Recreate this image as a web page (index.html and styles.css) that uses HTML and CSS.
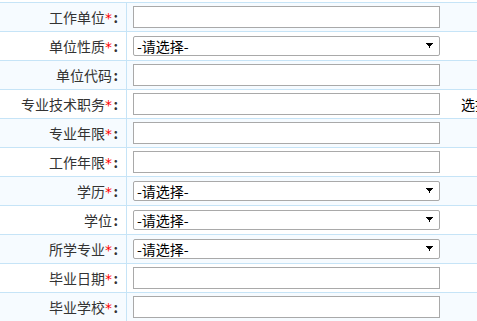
FILE: index.html
```html
<!DOCTYPE html>
<html lang="zh-CN">
<head>
<meta charset="utf-8">
<title>表单</title>
<link rel="stylesheet" href="styles.css">
</head>
<body>
<table class="form">
  <tbody>
    <tr class="alt">
      <td class="label">工作单位<span class="req">*</span><span class="colon">:</span></td>
      <td class="field"><input class="text" type="text"></td>
      <td class="extra"></td>
    </tr>
    <tr>
      <td class="label">单位性质<span class="req">*</span><span class="colon">:</span></td>
      <td class="field"><select class="sel"><option>-请选择-</option></select></td>
      <td class="extra"></td>
    </tr>
    <tr class="alt">
      <td class="label">单位代码<span class="colon">:</span></td>
      <td class="field"><input class="text" type="text"></td>
      <td class="extra"></td>
    </tr>
    <tr>
      <td class="label">专业技术职务<span class="req">*</span><span class="colon">:</span></td>
      <td class="field"><input class="text" type="text"></td>
      <td class="extra">选择</td>
    </tr>
    <tr class="alt">
      <td class="label">专业年限<span class="req">*</span><span class="colon">:</span></td>
      <td class="field"><input class="text" type="text"></td>
      <td class="extra"></td>
    </tr>
    <tr>
      <td class="label">工作年限<span class="req">*</span><span class="colon">:</span></td>
      <td class="field"><input class="text" type="text"></td>
      <td class="extra"></td>
    </tr>
    <tr class="alt">
      <td class="label">学历<span class="req">*</span><span class="colon">:</span></td>
      <td class="field"><select class="sel"><option>-请选择-</option></select></td>
      <td class="extra"></td>
    </tr>
    <tr>
      <td class="label">学位<span class="colon">:</span></td>
      <td class="field"><select class="sel"><option>-请选择-</option></select></td>
      <td class="extra"></td>
    </tr>
    <tr class="alt">
      <td class="label">所学专业<span class="req">*</span><span class="colon">:</span></td>
      <td class="field"><select class="sel"><option>-请选择-</option></select></td>
      <td class="extra"></td>
    </tr>
    <tr>
      <td class="label">毕业日期<span class="req">*</span><span class="colon">:</span></td>
      <td class="field"><input class="text" type="text"></td>
      <td class="extra"></td>
    </tr>
    <tr class="alt">
      <td class="label">毕业学校<span class="req">*</span><span class="colon">:</span></td>
      <td class="field"><input class="text" type="text"></td>
      <td class="extra"></td>
    </tr>
  </tbody>
</table>
</body>
</html>
```
FILE: styles.css
```css
html, body {
  margin: 0;
  padding: 0;
  overflow: hidden;
  background: #fff;
}

body {
  font-family: "Noto Sans CJK SC", "Microsoft YaHei", sans-serif;
  font-size: 14px;
  color: #333;
}

.form {
  margin-top: 2px;
  width: 540px;
  border-collapse: separate;
  border-spacing: 0;
  table-layout: fixed;
}

.form td {
  height: 28px;
  padding: 0;
  border-top: 1px solid #c6e4f7;
  vertical-align: middle;
  white-space: nowrap;
  line-height: 16px;
}

.form tr.alt td {
  background: #f6fbff;
}

.label {
  width: 118px;
  padding-right: 8px !important;
  border-right: 1px solid #c6e4f7;
  text-align: right;
}

.req {
  color: #f00;
  font-family: "DejaVu Sans", sans-serif;
  font-size: 14px;
}

.colon {
  display: inline-block;
  width: 6px;
  text-align: right;
  font-weight: bold;
}

.field {
  width: 307px;
  padding-left: 6px !important;
  padding-right: 21px !important;
}

.extra {
  color: #000;
}

.text {
  display: block;
  box-sizing: border-box;
  width: 307px;
  height: 22px;
  margin: 0;
  border: 1px solid #a9a9a9;
  background: #fff;
  padding: 0 3px;
  font: inherit;
}

.sel {
  display: block;
  box-sizing: border-box;
  width: 307px;
  height: 20px;
  margin: 0;
  padding: 0 0 0 3px;
  border: 1px solid #a9a9a9;
  border-radius: 2px;
  background: #fff url("data:image/svg+xml;utf8,<svg xmlns='http://www.w3.org/2000/svg' width='7' height='6' shape-rendering='crispEdges'><path d='M0 0h7v1h-1v1h-1v1h-1v2h-1v-2h-1v-1h-1v-1h-1z' fill='black'/></svg>") no-repeat right 6px center;
  -webkit-appearance: none;
  appearance: none;
  font-family: "Noto Sans CJK SC", sans-serif;
  font-size: 14px;
  line-height: 18px;
  color: #000;
}
```
